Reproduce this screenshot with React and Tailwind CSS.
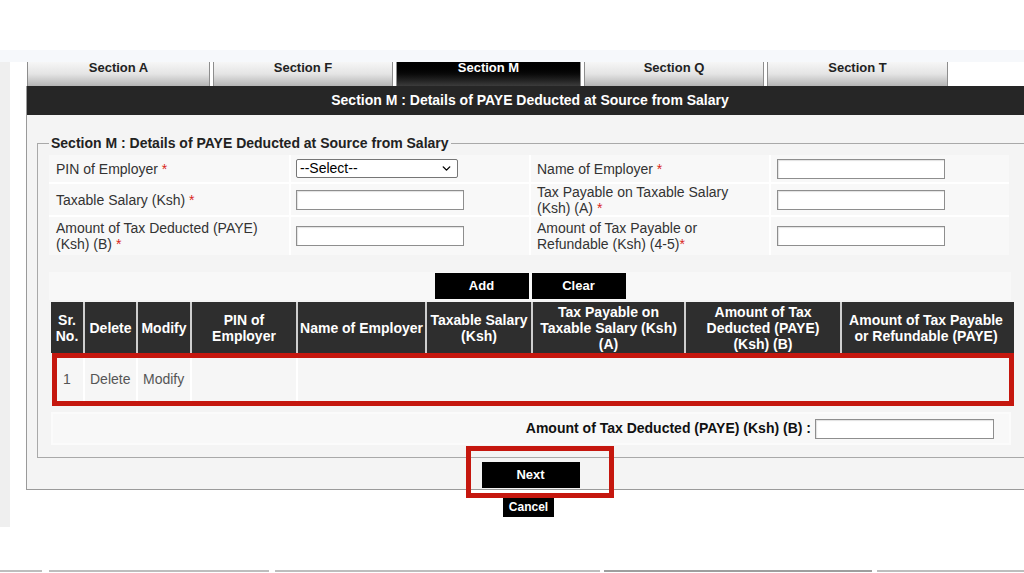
import { ChevronDown } from 'lucide-react';

// Section M — PAYE deducted at source (iTax-style return form)

const tabs = [
  { label: 'Section A', w: 'w-[183px]' },
  { label: 'Section F', w: 'w-[180px]' },
  { label: 'Section M', w: 'w-[185px]', active: true },
  { label: 'Section Q', w: 'w-[180px]' },
  { label: 'Section T', w: 'w-[181px]' },
];

const columns = [
  { head: ['Sr.', 'No.'], w: 'w-[34px]' },
  { head: ['Delete'], w: 'w-[53px]' },
  { head: ['Modify'], w: 'w-[54px]' },
  { head: ['PIN of', 'Employer'], w: 'w-[106px]' },
  { head: ['Name of Employer'], w: 'w-[129px]' },
  { head: ['Taxable Salary', '(Ksh)'], w: 'w-[106px]' },
  { head: ['Tax Payable on', 'Taxable Salary (Ksh)', '(A)'], w: 'w-[153px]' },
  { head: ['Amount of Tax', 'Deducted (PAYE)', '(Ksh) (B)'], w: 'w-[156px]' },
  { head: ['Amount of Tax Payable', 'or Refundable (PAYE)'], w: 'w-[168px]' },
];

const Req = () => <span className="text-[#d9261c]"> *</span>;

function TextBox({ w = 'w-[168px]' }) {
  return (
    <input
      type="text"
      className={`${w} h-[20px] bg-white border border-[#8e8e8e] shadow-[inset_1px_1px_1px_rgba(0,0,0,0.12)] outline-none`}
    />
  );
}

function Label({ children, pl = 'pl-[7px]' }) {
  return (
    <div className={`flex items-center bg-[#f8f8f8] ${pl} text-[14px] leading-[16px] text-[#333]`}>
      <div>{children}</div>
    </div>
  );
}

function Field({ children, pl = 'pl-[5px]' }) {
  return <div className={`flex items-center bg-[#f8f8f8] ${pl}`}>{children}</div>;
}

function BlackButton({ children, className = '' }) {
  return (
    <button className={`bg-black text-white font-bold flex items-center justify-center ${className}`}>
      {children}
    </button>
  );
}

export default function App() {
  return (
    <div className="w-[1024px] h-[573px] bg-white overflow-hidden flex flex-col font-['Liberation_Sans',Arial,sans-serif]">
      <div className="h-[50px] shrink-0" />
      <div className="h-[12px] shrink-0 bg-[#f6f8fb]" />

      <div className="flex flex-1 min-h-0">
        {/* left gutter */}
        <div className="w-[10px] h-[465px] shrink-0 bg-[#efefef]" />

        <div className="ml-[16px] w-[1010px] shrink-0 flex flex-col">
          {/* Tabs */}
          <div className="flex gap-[3px] ml-[1px] h-[24px]">
            {tabs.map((t) => (
              <div
                key={t.label}
                className={`${t.w} h-full border-x border-[#8d8d8d] text-center text-[13px] leading-[12px] font-bold ${
                  t.active
                    ? 'bg-linear-to-b from-black via-[#0a0a0a] to-[#3c3c3c] text-white'
                    : 'bg-linear-to-b from-[#f6f6f6] via-[#e4e4e4] to-[#b4b4b4] text-[#222]'
                }`}
              >
                {t.label}
              </div>
            ))}
          </div>

          {/* Panel */}
          <div className="border-l border-b border-[#9a9a9a] bg-[#f4f4f4] pb-[1px]">
            <div className="h-[29px] bg-[#262626] flex items-center justify-center pr-[3px] text-white font-bold text-[14px]">
              Section M : Details of PAYE Deducted at Source from Salary
            </div>

            <fieldset className="mt-[20px] ml-[10px] w-[986px] border border-[#a9a9a9] px-[11px] pt-[3px] pb-[12px]">
              <legend className="px-[2px] text-[14px] leading-[17px] font-bold text-[#222]">
                Section M : Details of PAYE Deducted at Source from Salary
              </legend>

              {/* Entry form */}
              <div className="grid grid-cols-[240px_238px_238px_238px] grid-rows-[27px_31px_38px] gap-[2px] bg-white w-[960px]">
                <Label>PIN of Employer<Req /></Label>
                <Field>
                  <div className="w-[162px] h-[19px] bg-white border border-[#767676] rounded-[2px] flex items-center justify-between pl-[3px] pr-[4px] text-[14px] text-black">
                    <span>--Select--</span>
                    <ChevronDown size={13} strokeWidth={2.6} />
                  </div>
                </Field>
                <Label pl="pl-[6px]">Name of Employer<Req /></Label>
                <Field pl="pl-[6px]"><TextBox /></Field>

                <Label>Taxable Salary (Ksh)<Req /></Label>
                <Field><TextBox /></Field>
                <Label pl="pl-[6px]">Tax Payable on Taxable Salary<br />(Ksh) (A)<Req /></Label>
                <Field pl="pl-[6px]"><TextBox /></Field>

                <Label>Amount of Tax Deducted (PAYE)<br />(Ksh) (B)<Req /></Label>
                <Field><TextBox /></Field>
                <Label pl="pl-[6px]">Amount of Tax Payable or<br />Refundable (Ksh) (4-5)<span className="text-[#d9261c]">*</span></Label>
                <Field pl="pl-[6px]"><TextBox /></Field>
              </div>

              {/* Add / Clear */}
              <div className="mt-[17px] h-[28px] w-[962px] bg-[#f8f8f8] flex items-center justify-center gap-[3px]">
                <BlackButton className="w-[94px] h-[26px] text-[13px]">Add</BlackButton>
                <BlackButton className="w-[94px] h-[26px] text-[13px]">Clear</BlackButton>
              </div>

              {/* Grid header */}
              <div className="mt-[2px] ml-[2px] flex h-[51px] bg-[#2e2e2e]">
                {columns.map((c, i) => (
                  <div
                    key={i}
                    className={`${c.w} shrink-0 flex flex-col items-center justify-center text-white font-bold text-[14px] leading-[16px] text-center ${
                      i < columns.length - 1 ? 'border-r-2 border-[#cfcfcf]' : ''
                    }`}
                  >
                    {c.head.map((line) => (
                      <span key={line} className="whitespace-nowrap">{line}</span>
                    ))}
                  </div>
                ))}
              </div>

              {/* Row (highlighted) */}
              <div className="ml-[3px] w-[962px] h-[53px] border-[5px] border-[#c5170e] flex bg-[#f6f6f6] text-[14px] text-[#555]">
                <div className="w-[28px] shrink-0 border-r-2 border-white flex items-center pl-[6px]">1</div>
                <div className="w-[53px] shrink-0 border-r-2 border-white flex items-center pl-[5px]">Delete</div>
                <div className="w-[54px] shrink-0 border-r-2 border-white flex items-center pl-[5px]">Modify</div>
                <div className="w-[106px] shrink-0 border-r-2 border-white" />
                <div className="flex-1" />
              </div>

              {/* Total */}
              <div className="mt-[6px] ml-[2px] w-[960px] h-[33px] bg-[#f8f8f8] border-2 border-[#fbfbfb] flex items-center justify-end pr-[15px]">
                <span className="font-bold text-[14px] text-[#111]">Amount of Tax Deducted (PAYE) (Ksh) (B) :</span>
                <input
                  type="text"
                  className="ml-[4px] w-[179px] h-[20px] bg-white border border-[#8e8e8e] shadow-[inset_1px_1px_1px_rgba(0,0,0,0.12)] outline-none"
                />
              </div>
            </fieldset>

            {/* Next */}
            <div className="mt-[4px] flex justify-center pr-[2px]">
              <div className="relative">
                <BlackButton className="w-[98px] h-[26px] text-[13px]">Next</BlackButton>
                <div className="absolute -top-[16px] -left-[16px] -right-[34px] -bottom-[10px] border-[5px] border-[#c5170e] pointer-events-none" />
              </div>
            </div>
          </div>

          {/* Cancel */}
          <div className="mt-[7px] flex justify-center pr-[5px]">
            <BlackButton className="w-[51px] h-[20px] text-[12px]">Cancel</BlackButton>
          </div>
        </div>
      </div>

      {/* cut-off tab strip at bottom */}
      <div className="h-[3px] shrink-0 flex">
        <div className="w-[42px] h-[2px] bg-[#bdbdbd]" />
        <div className="ml-[7px] w-[220px] h-[2px] bg-[#bdbdbd]" />
        <div className="ml-[6px] w-[325px] h-[2px] bg-[#bdbdbd]" />
        <div className="ml-[4px] w-[268px] h-[2px] bg-[#9e9e9e]" />
        <div className="ml-[5px] flex-1 h-[2px] bg-[#bdbdbd]" />
      </div>
    </div>
  );
}
